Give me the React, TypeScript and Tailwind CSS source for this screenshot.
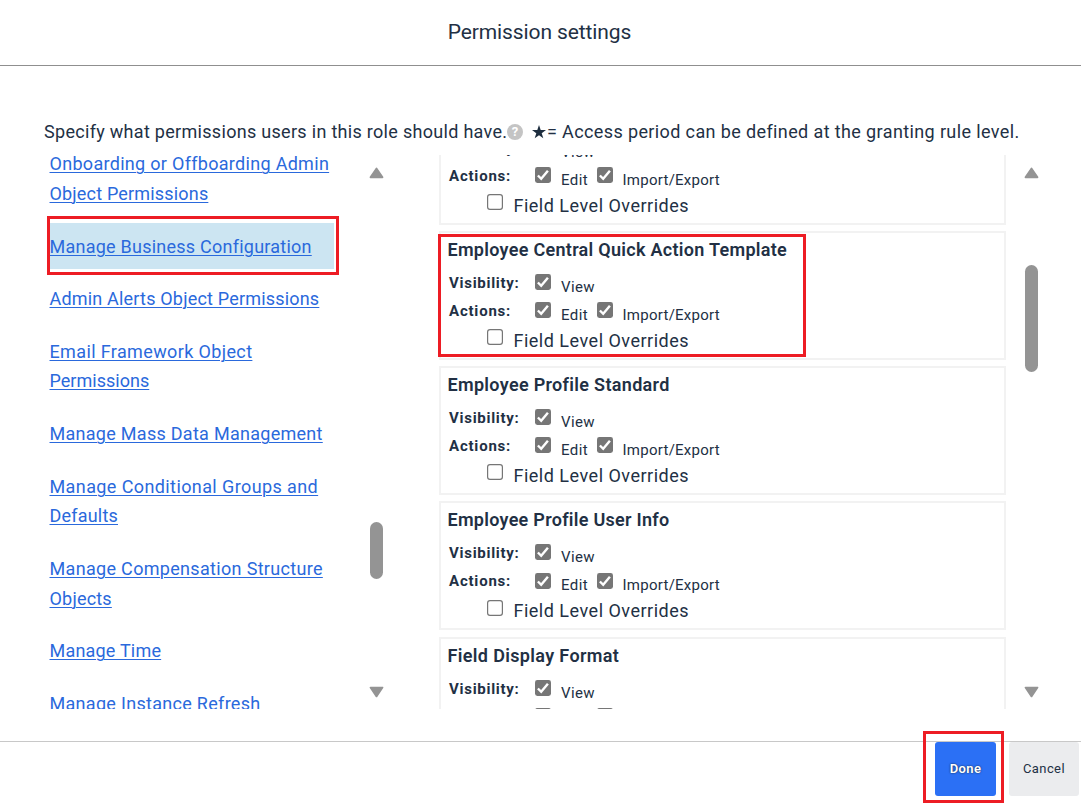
import React from "react";

const links: { lines: string[]; tracking: string[]; active?: boolean }[] = [
  { lines: ["Onboarding or Offboarding Admin", "Object Permissions"], tracking: ["tracking-[0.3px]", "tracking-[0.18px]"] },
  { lines: ["Manage Business Configuration"], tracking: ["tracking-[0.24px]"], active: true },
  { lines: ["Admin Alerts Object Permissions"], tracking: ["tracking-[0.19px]"] },
  { lines: ["Email Framework Object", "Permissions"], tracking: ["tracking-[0.37px]", "tracking-[0.02px]"] },
  { lines: ["Manage Mass Data Management"], tracking: ["tracking-[0.28px]"] },
  { lines: ["Manage Conditional Groups and", "Defaults"], tracking: ["tracking-[0.4px]", "tracking-[0.2px]"] },
  { lines: ["Manage Compensation Structure", "Objects"], tracking: ["tracking-[0.32px]", "tracking-[0.2px]"] },
  { lines: ["Manage Time"], tracking: ["tracking-[0.2px]"] },
  { lines: ["Manage Instance Refresh"], tracking: ["tracking-[0.3px]"] },
];

const groups = [
  { title: "", tracking: "tracking-[0.3px]" },
  { title: "Employee Central Quick Action Template", tracking: "tracking-[0.29px]" },
  { title: "Employee Profile Standard", tracking: "tracking-[0.32px]" },
  { title: "Employee Profile User Info", tracking: "tracking-[0.28px]" },
  { title: "Field Display Format", tracking: "tracking-[0.35px]" },
];

function Check({ on = false }: { on?: boolean }) {
  return (
    <svg width="16" height="16" viewBox="0 0 16 16" className="block shrink-0">
      {on ? (
        <>
          <rect width="16" height="16" rx="2.4" fill="#767676" />
          <path d="M2.9 8.5 6.2 11.8 12.9 3.7" fill="none" stroke="#fff" strokeWidth="2.4" />
        </>
      ) : (
        <rect x="0.6" y="0.6" width="14.8" height="14.8" rx="2.4" fill="#fff" stroke="#767676" strokeWidth="1.2" />
      )}
    </svg>
  );
}

function Scrollbar({ gap, thumb }: { gap: string; thumb: string }) {
  return (
    <div className="flex h-[554px] w-[15px] shrink-0 flex-col items-center pt-[12px]">
      <svg width="15" height="12" viewBox="0 0 15 12" className="shrink-0">
        <path d="M7.5 1.5 13.5 10.3H1.5Z" fill="#949494" stroke="#949494" strokeWidth="1.8" strokeLinejoin="round" />
      </svg>
      <div className={`w-[13px] shrink-0 rounded-full bg-[#949494] ${gap} ${thumb}`} />
      <svg width="15" height="12" viewBox="0 0 15 12" className="mt-auto mb-[11px] shrink-0">
        <path d="M7.5 10.4 13.5 1.6H1.5Z" fill="#949494" stroke="#949494" strokeWidth="1.8" strokeLinejoin="round" />
      </svg>
    </div>
  );
}

function Group({ title, tracking }: { title: string; tracking: string }) {
  return (
    <section className="mb-[6.25px] h-[129px] w-[567px] shrink-0 border-2 border-[#f2f2f2] pl-[6.5px] text-[15px] whitespace-nowrap">
      <h2 className={`h-[39px] pt-[4px] text-[18px] leading-[26px] font-semibold ${tracking}`}>{title}</h2>
      <div className="flex h-[28px] pl-[1.5px]">
        <span className="w-[86px] leading-[22px] font-bold tracking-[0.72px]">Visibility:</span>
        <div className="mt-[2px]"><Check on /></div>
        <span className="ml-[10px] pt-[1.8px] leading-[26px] tracking-[0.4px]">View</span>
      </div>
      <div className="flex h-[28px] pl-[1.5px]">
        <span className="w-[86px] leading-[22px] font-bold tracking-[0.8px]">Actions:</span>
        <div className="mt-[2.2px]"><Check on /></div>
        <span className="ml-[10px] w-[36px] pt-[1.8px] leading-[26px] tracking-[0.4px]">Edit</span>
        <div className="mt-[2.2px]"><Check on /></div>
        <span className="ml-[9.5px] pt-[1.8px] leading-[26px] tracking-[0.26px]">Import/Export</span>
      </div>
      <div className="flex h-[28px] pl-[39.5px]">
        <div className="mt-[1.2px]"><Check /></div>
        <span className="ml-[10.5px] text-[18px] leading-[26px] tracking-[0.5px]">Field Level Overrides</span>
      </div>
    </section>
  );
}

export default function App() {
  return (
    <main className="relative flex h-[805px] w-[1081px] flex-col overflow-hidden bg-white font-['Roboto',sans-serif] text-[#223044]">
      <header className="flex h-[66px] shrink-0 justify-center border-b border-[#8f8f8f] pt-[17px] pr-[2px]">
        <h1 className="text-[21px] leading-[31px] tracking-[-0.1px]">Permission settings</h1>
      </header>
      <p className="mt-[53px] flex h-[36px] shrink-0 pl-[44px] text-[18px] leading-[26px] whitespace-nowrap">
        <span className="w-[463px] shrink-0 tracking-[0.3px]">Specify what permissions users in this role should have.</span>
        <span className="mt-[5px] flex h-[16px] w-[16px] items-center justify-center rounded-full bg-[#c4c4c4] text-[13px] leading-[16px] font-bold text-white">?</span>
        <svg width="14" height="14" viewBox="0 0 14 14" className="mt-[6px] ml-[9px] shrink-0" fill="#1d2d3e">
          <path d="M7 0 8.7 5H14L9.7 8.2 11.3 13.3 7 10.2 2.7 13.3 4.3 8.2 0 5H5.3Z" />
        </svg>
        <span className="ml-px tracking-[0.38px]">= Access period can be defined at the granting rule level.</span>
      </p>
      <div className="flex h-[554px] shrink-0 overflow-hidden">
        <nav className="h-[554px] w-[340px] shrink-0 overflow-hidden pl-[50px]">
          <ul className="-mt-[13.9px] w-[284px] text-[18px] leading-[29.4px] text-[#2a69dc]">
            {links.map((item) => (
              <li key={item.lines[0]} className={item.active ? "mb-[6.75px] bg-[#cce5f2] py-[8.3px]" : "mb-[6.75px] py-[8.3px]"}>
                <a className="-ml-[0.5px] block whitespace-nowrap underline decoration-1 underline-offset-2">
                  {item.lines.map((line, i) => (
                    <span key={line} className={`block ${item.tracking[i]}`}>{line}</span>
                  ))}
                </a>
              </li>
            ))}
          </ul>
        </nav>
        <div className="ml-[29px]">
          <Scrollbar gap="mt-[343px]" thumb="h-[57px]" />
        </div>
        <div className="ml-[55px] h-[554px] w-[567px] shrink-0 overflow-hidden">
          <div className="-mt-[59.3px] flex flex-col">
            {groups.map((g, i) => (
              <Group key={i} {...g} />
            ))}
          </div>
        </div>
        <div className="ml-[18px]">
          <Scrollbar gap="mt-[86px]" thumb="h-[107px]" />
        </div>
      </div>
      <footer className="mt-[32px] flex h-[64px] shrink-0 justify-end border-t border-[#c8c8c8] pr-[2px] text-[13px]">
        <button className="h-[54px] w-[61px] rounded-[3px] bg-[#2b70f5] font-semibold tracking-[0.4px] text-white [text-shadow:0_0_2px_#123]">Done</button>
        <button className="ml-[13px] h-[54px] w-[70px] rounded-[3px] bg-[#ebecee] tracking-[0.4px]">Cancel</button>
      </footer>
      <div className="pointer-events-none absolute top-[216px] left-[47px] h-[59px] w-[292px] border-[3px] border-[#ed1c24]" />
      <div className="pointer-events-none absolute top-[234px] left-[438px] h-[123px] w-[368px] border-[3px] border-[#ed1c24]" />
      <div className="pointer-events-none absolute top-[731px] left-[923px] h-[72px] w-[81px] border-[3px] border-[#ed1c24]" />
    </main>
  );
}
